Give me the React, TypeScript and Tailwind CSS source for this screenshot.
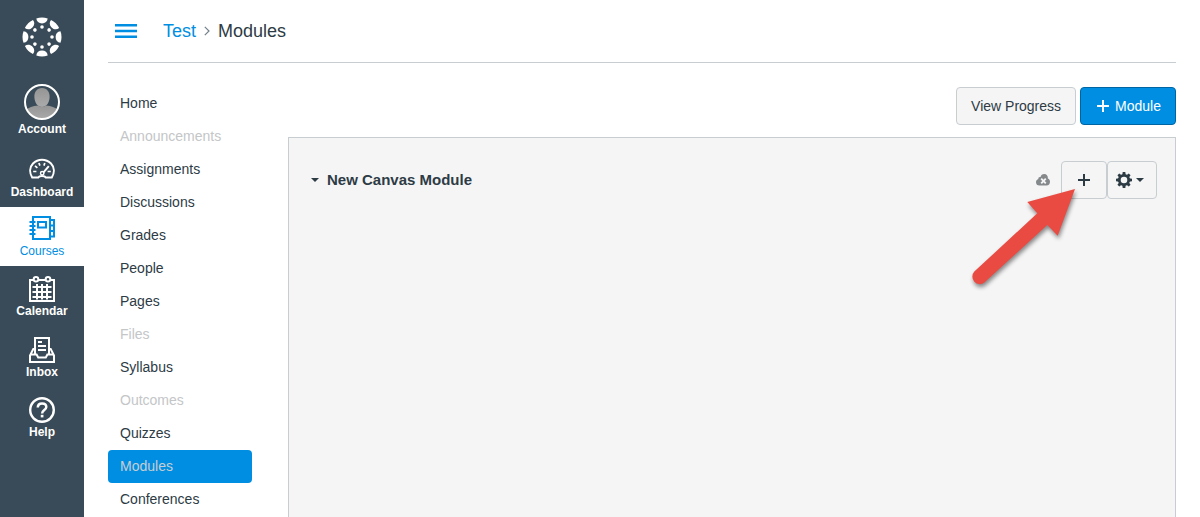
import type { ReactNode } from "react";

type GlobalItem = {
  label: string;
  icon: ReactNode;
  spacing: string;
  active?: boolean;
};

type CourseLink = {
  label: string;
  muted?: boolean;
  active?: boolean;
};

const EIGHTHS = [0, 45, 90, 135, 180, 225, 270, 315];

function CanvasLogo() {
  return (
    <svg width="40" height="40" viewBox="0 0 40 40" fill="white" aria-hidden="true">
      {EIGHTHS.map((angle) => (
        <g key={angle} transform={`rotate(${angle} 20 20)`}>
          <path d="M14.3 1.5 Q20 -0.5 25.7 1.5 C25.4 4.6 23.2 6.4 20 6.4 C16.8 6.4 14.6 4.6 14.3 1.5 Z" />
          <circle cx="20" cy="10" r="1.8" />
        </g>
      ))}
    </svg>
  );
}

function AvatarIcon() {
  return (
    <svg width="36" height="36" viewBox="0 0 36 36" aria-hidden="true">
      <defs>
        <clipPath id="avatar-clip">
          <circle cx="18" cy="18" r="16.5" />
        </clipPath>
        <linearGradient id="avatar-fill" x1="0" y1="0" x2="0" y2="1">
          <stop offset="0" stopColor="#959595" />
          <stop offset="1" stopColor="#ababab" />
        </linearGradient>
      </defs>
      <g clipPath="url(#avatar-clip)" fill="url(#avatar-fill)">
        <path d="M18 4 C23 4 26 8 25.6 13.5 C25.3 18.5 22.5 23 18 23 C13.5 23 10.7 18.5 10.4 13.5 C10 8 13 4 18 4 Z" />
        <path d="M2 36 V26 Q6 22 14 21.5 Q18 24 22 21.5 Q30 22 34 26 V36 Z" />
      </g>
      <circle cx="18" cy="18" r="17" fill="none" stroke="white" strokeWidth="2" />
    </svg>
  );
}

function DashboardIcon() {
  return (
    <svg width="26" height="26" viewBox="0 0 26 26" fill="none" stroke="currentColor" aria-hidden="true">
      <path
        d="M3.2 20.5 C0.2 15.5 0.6 10 4 6.5 C9 1.4 17 1.4 22 6.5 C25.4 10 25.8 15.5 22.8 20.5 H16.8 C16 18.9 14.7 18.9 13 18.9 C11.3 18.9 10 18.9 9.2 20.5 Z"
        strokeWidth="2"
      />
      <path d="M4.2 14.5 H7.4 M6 8.9 L8.4 10.9 M9.9 6 L10.9 8.6 M15.8 6 L14.9 8.6 M18.6 14.5 H21.8" strokeWidth="1.7" />
      <path d="M14.5 15.4 L19.8 9.2" strokeWidth="2" />
      <circle cx="13.2" cy="16.2" r="1.7" strokeWidth="1.5" />
    </svg>
  );
}

function CoursesIcon() {
  return (
    <svg width="26" height="26" viewBox="0 0 26 26" fill="none" stroke="currentColor" strokeWidth="2" aria-hidden="true">
      <path d="M21 23 H4 V1 H21 Z" />
      <path d="M21 4 H25 V20.5 H21 M21 9.5 H25 M21 15 H25" />
      <path d="M9 6 H17 V11.5 H9 Z" />
      <path d="M0.5 6 H6.5 M0.5 10 H6.5 M0.5 14 H6.5 M0.5 18 H6.5" />
    </svg>
  );
}

function CalendarIcon() {
  return (
    <svg width="26" height="26" viewBox="0 0 26 26" fill="none" stroke="currentColor" aria-hidden="true">
      <path d="M4.5 4 H1 V25 H25 V4 H21.5 M9.5 4 H16.5" strokeWidth="2" />
      <circle cx="7" cy="3.3" r="2.3" strokeWidth="2" />
      <circle cx="19" cy="3.3" r="2.3" strokeWidth="2" />
      <path d="M3.5 11 H22.5 M3.5 16 H22.5 M3.5 21 H22.5 M8 8 V23.5 M13 8 V23.5 M18 8 V23.5" strokeWidth="2" />
    </svg>
  );
}

function InboxIcon() {
  return (
    <svg width="26" height="26" viewBox="0 0 26 26" fill="none" stroke="currentColor" strokeWidth="2" aria-hidden="true">
      <path d="M6 17 V1 H20 V17" />
      <path d="M9 5 H13 M9 9 H17 M9 13 H17" />
      <path d="M6 12 H4.3 L1 18.5 V25 H25 V18.5 L21.7 12 H20" />
      <path d="M1 17.5 H7.6 L9.2 20.5 H16.8 L18.4 17.5 H25" />
    </svg>
  );
}

function HelpIcon() {
  return (
    <svg width="26" height="26" viewBox="0 0 26 26" fill="none" stroke="currentColor" aria-hidden="true">
      <circle cx="13" cy="13" r="11.8" strokeWidth="2.4" />
      <path d="M8.8 10.6 C8.8 7.8 10.6 6.4 13.1 6.4 C15.6 6.4 17.3 7.9 17.3 10 C17.3 13 13.1 13 13.1 16.4" strokeWidth="2.5" />
      <path d="M13.1 17.8 V20.4" strokeWidth="2.7" />
    </svg>
  );
}

function PlusIcon() {
  return (
    <svg width="12" height="12" viewBox="0 0 12 12" stroke="currentColor" strokeWidth="2" aria-hidden="true">
      <path d="M6 0 V12 M0 6 H12" />
    </svg>
  );
}

function GearIcon() {
  return (
    <svg width="16" height="16" viewBox="0 0 16 16" aria-hidden="true">
      <circle cx="8" cy="8" r="4.7" fill="none" stroke="currentColor" strokeWidth="2.8" />
      {EIGHTHS.map((angle) => (
        <path key={angle} d="M6.3 3 L6.7 0 H9.3 L9.7 3 Z" fill="currentColor" transform={`rotate(${angle} 8 8)`} />
      ))}
    </svg>
  );
}

function CaretIcon() {
  return (
    <svg width="8" height="4" viewBox="0 0 8 4" fill="currentColor" aria-hidden="true">
      <path d="M0 0 H8 L4 4 Z" />
    </svg>
  );
}

function UnpublishedIcon() {
  return (
    <svg width="14" height="12" viewBox="0 0 14 12" role="img" aria-label="Unpublished">
      <path
        d="M3.4 11.5 C1.3 11.5 0 10.2 0 8.2 C0 6.6 0.9 5.4 2.4 5 C2 3.6 3.2 2.6 4.5 3 C5 1.2 6.3 0 8.2 0 C10.6 0 12 1.8 11.9 4.4 C13.2 5 14 6.2 14 7.8 C14 10 12.7 11.5 10.6 11.5 Z"
        fill="#85898c"
      />
      <path d="M5.2 4.7 L9.8 9.3 M9.8 4.7 L5.2 9.3" stroke="#f5f5f5" strokeWidth="1.9" />
    </svg>
  );
}

function PointerArrow() {
  return (
    <svg
      className="pointer-events-none absolute -left-24 top-6 drop-shadow-[1px_3px_2px_rgba(0,0,0,0.45)]"
      width="116"
      height="108"
      viewBox="0 0 116 108"
      aria-hidden="true"
    >
      <path
        d="M110 4 L62.3 17 L72.3 28.3 L9.3 86.6 A7.5 7.5 0 0 0 19.4 97.6 L82.3 40 L92.7 50.7 Z"
        fill="#e94b43"
      />
    </svg>
  );
}

const globalItems: GlobalItem[] = [
  { label: "Account", icon: <AvatarIcon />, spacing: "pt-2 pb-[11px]" },
  { label: "Dashboard", icon: <DashboardIcon />, spacing: "pt-[9px] pb-[7px]" },
  { label: "Courses", icon: <CoursesIcon />, spacing: "pt-[9px] pb-[7px]", active: true },
  { label: "Calendar", icon: <CalendarIcon />, spacing: "pt-2.5 pb-2" },
  { label: "Inbox", icon: <InboxIcon />, spacing: "pt-2.5 pb-2" },
  { label: "Help", icon: <HelpIcon />, spacing: "pt-[9px] pb-[7px]" },
];

const courseLinks: CourseLink[] = [
  { label: "Home" },
  { label: "Announcements", muted: true },
  { label: "Assignments" },
  { label: "Discussions" },
  { label: "Grades" },
  { label: "People" },
  { label: "Pages" },
  { label: "Files", muted: true },
  { label: "Syllabus" },
  { label: "Outcomes", muted: true },
  { label: "Quizzes" },
  { label: "Modules", active: true },
  { label: "Conferences" },
];

function linkColor(link: CourseLink) {
  if (link.active) return "rounded-sm bg-[#008ee2] text-[#c7cdd1]";
  if (link.muted) return "text-[#c4c6c8]";
  return "text-[#2d3b45]";
}

export default function App() {
  return (
    <div className="flex h-screen overflow-hidden bg-white font-['Liberation_Sans',Arial,sans-serif] text-sm text-[#2d3b45]">
      <nav aria-label="Global" className="w-[84px] shrink-0 bg-[#394b58]">
        <a href="#" aria-label="Canvas" className="flex h-[76px] justify-center pt-[17px]">
          <CanvasLogo />
        </a>
        <ul>
          {globalItems.map((item) => (
            <li key={item.label}>
              <a
                href="#"
                className={`flex flex-col items-center gap-px text-xs leading-4 ${item.spacing} ${
                  item.active ? "bg-white text-[#008ee2]" : "font-bold text-white"
                }`}
              >
                {item.icon}
                {item.label}
              </a>
            </li>
          ))}
        </ul>
      </nav>

      <div className="flex min-w-0 flex-1 flex-col px-6">
        <header className="flex h-[63px] shrink-0 items-center border-b border-[#c7cdd1] pl-[7px]">
          <button type="button" aria-label="Toggle course navigation" className="text-[#008ee2]">
            <svg width="22" height="14" viewBox="0 0 22 14" fill="currentColor">
              <path d="M0 0 H22 V2.6 H0 Z M0 5.7 H22 V8.3 H0 Z M0 11.4 H22 V14 H0 Z" />
            </svg>
          </button>
          <div className="ml-[26px] flex items-center gap-2 text-lg">
            <a href="#" className="text-[#008ee2]">Test</a>
            <svg width="6" height="10" viewBox="0 0 6 10" fill="none" stroke="#73818c" strokeWidth="1.2" aria-hidden="true">
              <path d="M0.8 0.8 L5 5 L0.8 9.2" />
            </svg>
            <h1>Modules</h1>
          </div>
        </header>

        <div className="flex min-h-0 flex-1 gap-9 pt-6">
          <nav aria-label="Course" className="w-36 shrink-0">
            <ul>
              {courseLinks.map((link) => (
                <li key={link.label}>
                  <a href="#" className={`block pl-3 leading-[33px] ${linkColor(link)}`}>
                    {link.label}
                  </a>
                </li>
              ))}
            </ul>
          </nav>

          <main className="flex min-w-0 flex-1 flex-col">
            <div className="flex justify-end gap-1">
              <button type="button" className="h-[38px] rounded-sm border border-[#c7cdd1] bg-[#f5f5f5] px-3.5">
                View Progress
              </button>
              <button
                type="button"
                className="flex h-[38px] items-center gap-1.5 rounded-sm border border-[#0066a3] bg-[#008ee2] pl-4 pr-3.5 text-white"
              >
                <PlusIcon />
                Module
              </button>
            </div>

            <section className="mt-3 flex-1 border border-b-0 border-[#c7cdd1] bg-[#f5f5f5] pl-[22px] pr-[18px] pt-[23px]">
              <div className="flex items-center">
                <button type="button" className="flex items-center gap-2 text-[15px] font-bold" aria-expanded="true">
                  <CaretIcon />
                  New Canvas Module
                </button>
                <div className="ml-auto flex items-center gap-[11px]">
                  <UnpublishedIcon />
                  <div className="relative flex">
                    <button
                      type="button"
                      aria-label="Add item"
                      className="flex h-[38px] w-[46px] items-center justify-center rounded-sm border border-[#c7cdd1]"
                    >
                      <PlusIcon />
                    </button>
                    <button
                      type="button"
                      aria-label="Module settings"
                      className="flex h-[38px] w-[50px] items-center gap-1 rounded-sm border border-[#c7cdd1] pl-2"
                    >
                      <GearIcon />
                      <CaretIcon />
                    </button>
                    <PointerArrow />
                  </div>
                </div>
              </div>
            </section>
          </main>
        </div>
      </div>
    </div>
  );
}
